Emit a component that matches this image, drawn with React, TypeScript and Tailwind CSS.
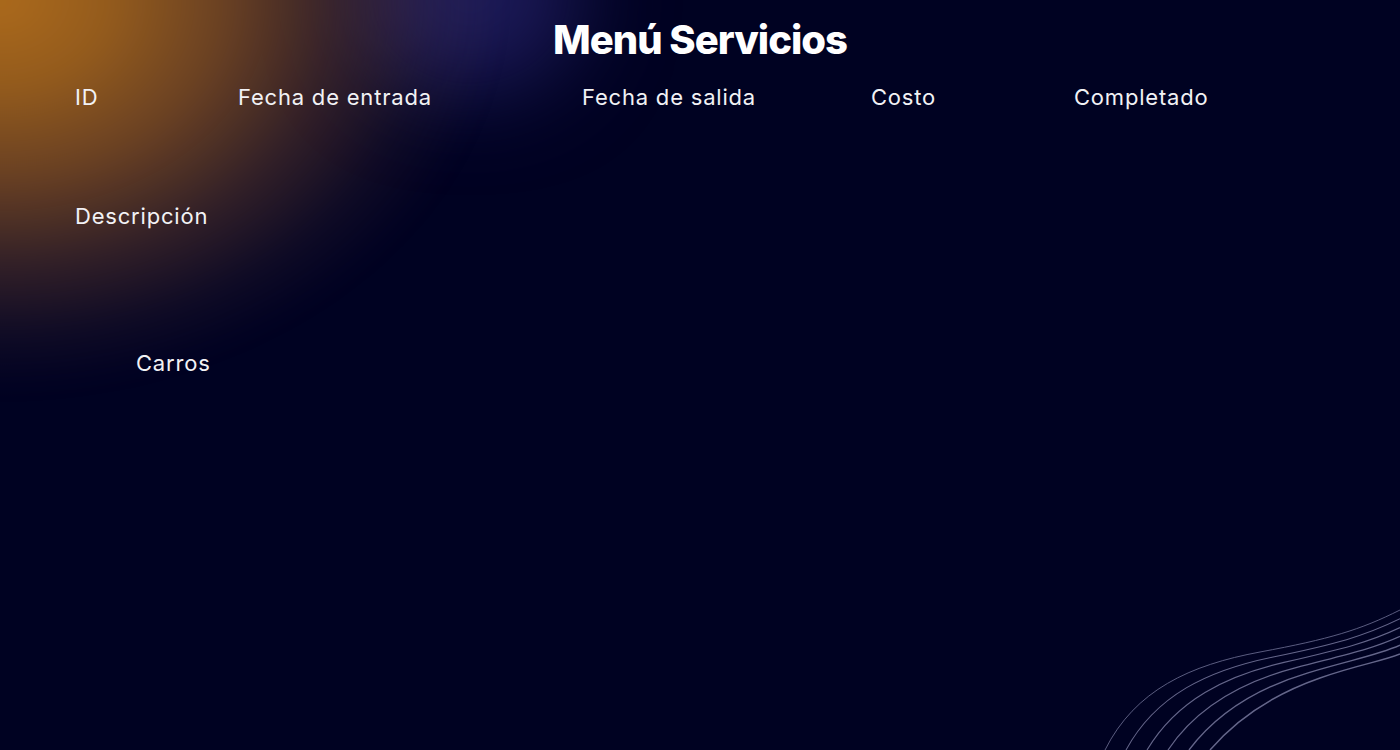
import React from 'react';

const columns = ['ID', 'Fecha de entrada', 'Fecha de salida', 'Costo', 'Completado'];

// outer and inner wave line, interpolated for the lines in between
const outer = [1105, 750, 1135, 690, 1190, 665, 1260, 652, 1360, 630, 1400, 610];
const inner = [1210, 750, 1240, 715, 1280, 692, 1320, 678, 1380, 662, 1400, 654];

const Waves = () => (
  <svg
    className="pointer-events-none absolute bottom-0 right-0"
    width="300"
    height="150"
    viewBox="1100 600 300 150"
    fill="none"
  >
    {[0, 1, 2, 3, 4, 5].map((i) => {
      const p = outer.map((v, k) => (v + ((inner[k] - v) * i) / 5).toFixed(1));
      return (
        <path
          key={i}
          d={`M${p[0]},${p[1]} C${p[2]},${p[3]} ${p[4]},${p[5]} ${p[6]},${p[7]} S${p[8]},${p[9]} ${p[10]},${p[11]}`}
          stroke="#64668a"
          strokeWidth={0.9 + i * 0.12}
        />
      );
    })}
  </svg>
);

export default function App() {
  return (
    <div
      className="relative h-[750px] w-[1400px] overflow-hidden bg-[#000222] text-[#f2f2f5]"
      style={{ fontFamily: 'Inter, "Noto Sans", sans-serif' }}
    >
      {/* blue haze near the title */}
      <div className="pointer-events-none absolute left-[360px] top-[-100px] h-[190px] w-[220px] rounded-full bg-[#1c1a58] blur-[45px]" />
      {/* warm glow, top left */}
      <div className="pointer-events-none absolute left-[-500px] top-[-390px] h-[780px] w-[1000px] bg-[radial-gradient(closest-side,rgba(172,106,28,1)_0%,rgba(172,106,28,0.86)_22%,rgba(170,104,36,0.62)_45%,rgba(150,92,52,0.33)_68%,rgba(120,80,64,0.12)_86%,transparent_100%)] blur-[12px]" />

      <div className="relative flex flex-col">
        <h1 className="pt-[16px] text-center text-[40px] font-extrabold leading-[48px] tracking-[-1px] text-white">
          Menú Servicios
        </h1>

        <div className="grid grid-cols-[163px_344px_289px_203px_1fr] pl-[75px] pt-[18px] text-[22px] leading-[30px] tracking-[0.8px]">
          {columns.map((c) => (
            <span key={c}>{c}</span>
          ))}
        </div>

        <div className="pl-[75px] pt-[89px] text-[22px] leading-[30px] tracking-[0.8px]">Descripción</div>

        <div className="pl-[136px] pt-[117px] text-[22px] leading-[30px] tracking-[0.8px]">Carros</div>
      </div>

      <Waves />
    </div>
  );
}
